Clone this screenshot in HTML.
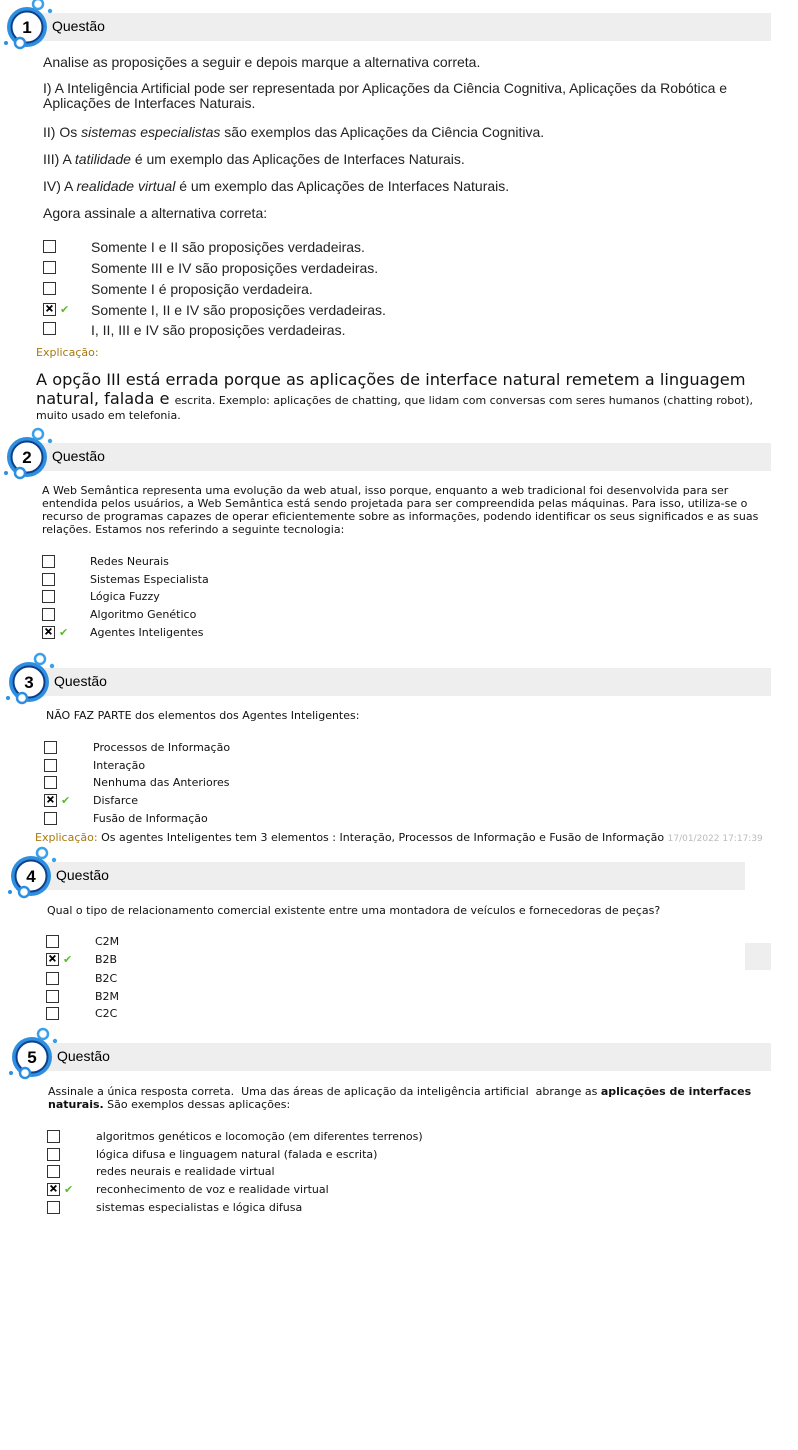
<!DOCTYPE html>
<html><head><meta charset="utf-8"><style>
body{margin:0;width:798px;height:1450px;background:#fff;position:relative;overflow:hidden;font-family:"DejaVu Sans",Verdana,sans-serif;color:#000}
.a{position:absolute;white-space:nowrap}
.bar{position:absolute;background:#eeeeee;height:28px}
.t{position:absolute;font-family:"Liberation Sans",Arial,sans-serif;font-size:14px}
.q1{font-family:"Liberation Sans",Arial,sans-serif;font-size:14px;color:#222}
.s{font-size:11px;color:#111}
.cb{position:absolute;width:11px;height:11px;border:1px solid #333;background:#fff}
.cb.x::after{content:"✕";position:absolute;left:0;top:-1px;font-size:10px;font-weight:900;line-height:13px;width:11px;text-align:center;-webkit-text-stroke:0.8px #000}
.ck{position:absolute;color:#5bbd2b;font-size:11px;font-weight:bold}
.ex{color:#a8780c;font-size:11px}
</style></head><body>
<svg width="0" height="0" style="position:absolute"><defs>
<g id="ic">
<circle cx="0" cy="0" r="20" fill="#2e8fe0"/>
<circle cx="0" cy="0" r="15.5" fill="#fff" stroke="#0d3f8c" stroke-width="2"/>
<circle cx="11" cy="-23" r="5" fill="#fff" stroke="#3aa0ea" stroke-width="2.5"/>
<circle cx="23" cy="-16" r="2.2" fill="#3aa0ea"/>
<circle cx="-7" cy="16" r="5" fill="#fff" stroke="#2e8fe0" stroke-width="2.5"/>
<circle cx="-21" cy="16" r="2" fill="#2e8fe0"/>
</g></defs></svg>

<div class="bar" style="left:40px;top:13px;width:731px"></div>
<div class="bar" style="left:40px;top:443px;width:731px"></div>
<div class="bar" style="left:40px;top:668px;width:731px"></div>
<div class="bar" style="left:40px;top:862px;width:705px"></div>
<div class="bar" style="left:40px;top:1043px;width:731px"></div>
<div class="bar" style="left:745px;top:943px;width:26px;height:27px"></div>

<svg class="a" style="left:0;top:0" width="798" height="1450">
<use href="#ic" x="27" y="27"/><text x="27" y="33" font-family="Liberation Sans" font-weight="bold" font-size="17" text-anchor="middle">1</text>
<use href="#ic" x="27" y="457"/><text x="27" y="463" font-family="Liberation Sans" font-weight="bold" font-size="17" text-anchor="middle">2</text>
<use href="#ic" x="29" y="682"/><text x="29" y="688" font-family="Liberation Sans" font-weight="bold" font-size="17" text-anchor="middle">3</text>
<use href="#ic" x="31" y="876"/><text x="31" y="882" font-family="Liberation Sans" font-weight="bold" font-size="17" text-anchor="middle">4</text>
<use href="#ic" x="32" y="1057"/><text x="32" y="1063" font-family="Liberation Sans" font-weight="bold" font-size="17" text-anchor="middle">5</text>
</svg>
<div class="t" style="left:52px;top:18px">Questão</div>
<div class="t" style="left:52px;top:448px">Questão</div>
<div class="t" style="left:54px;top:673px">Questão</div>
<div class="t" style="left:56px;top:867px">Questão</div>
<div class="t" style="left:57px;top:1048px">Questão</div>

<!-- Q1 -->
<div class="a q1" style="left:43px;top:54px">Analise as proposições a seguir e depois marque a alternativa correta.</div>
<div class="a q1" style="left:43px;top:81px;line-height:15px">I) A Inteligência Artificial pode ser representada por Aplicações da Ciência Cognitiva, Aplicações da Robótica e<br>Aplicações de Interfaces Naturais.</div>
<div class="a q1" style="left:43px;top:124px">II) Os <i>sistemas especialistas</i> são exemplos das Aplicações da Ciência Cognitiva.</div>
<div class="a q1" style="left:43px;top:151px">III) A <i>tatilidade</i> é um exemplo das Aplicações de Interfaces Naturais.</div>
<div class="a q1" style="left:43px;top:178px">IV) A <i>realidade virtual</i> é um exemplo das Aplicações de Interfaces Naturais.</div>
<div class="a q1" style="left:43px;top:205px">Agora assinale a alternativa correta:</div>
<div class="cb" style="left:43px;top:240px"></div><div class="a q1" style="left:91px;top:239px">Somente I e II são proposições verdadeiras.</div>
<div class="cb" style="left:43px;top:261px"></div><div class="a q1" style="left:91px;top:260px">Somente III e IV são proposições verdadeiras.</div>
<div class="cb" style="left:43px;top:282px"></div><div class="a q1" style="left:91px;top:281px">Somente I é proposição verdadeira.</div>
<div class="cb x" style="left:43px;top:303px"></div><div class="ck" style="left:60px;top:303px">✔</div><div class="a q1" style="left:91px;top:302px">Somente I, II e IV são proposições verdadeiras.</div>
<div class="cb" style="left:43px;top:322px"></div><div class="a q1" style="left:91px;top:322px">I, II, III e IV são proposições verdadeiras.</div>
<div class="a ex" style="left:36px;top:346px">Explicação:</div>
<div class="a" style="left:36px;top:370px;font-size:16.2px;color:#111;line-height:19px">A opção III está errada porque as aplicações de interface natural remetem a linguagem<br>natural, falada e <span style="font-size:11px">escrita. Exemplo: aplicações de chatting, que lidam com conversas com seres humanos (chatting robot),</span></div>
<div class="a s" style="left:36px;top:409px">muito usado em telefonia.</div>

<!-- Q2 -->
<div class="a s" style="left:42px;top:484px;line-height:13px">A Web Semântica representa uma evolução da web atual, isso porque, enquanto a web tradicional foi desenvolvida para ser<br>entendida pelos usuários, a Web Semântica está sendo projetada para ser compreendida pelas máquinas. Para isso, utiliza-se o<br>recurso de programas capazes de operar eficientemente sobre as informações, podendo identificar os seus significados e as suas<br>relações. Estamos nos referindo a seguinte tecnologia:</div>
<div class="cb" style="left:42px;top:555px"></div><div class="a s" style="left:90px;top:555px">Redes Neurais</div>
<div class="cb" style="left:42px;top:573px"></div><div class="a s" style="left:90px;top:573px">Sistemas Especialista</div>
<div class="cb" style="left:42px;top:590px"></div><div class="a s" style="left:90px;top:590px">Lógica Fuzzy</div>
<div class="cb" style="left:42px;top:608px"></div><div class="a s" style="left:90px;top:608px">Algoritmo Genético</div>
<div class="cb x" style="left:42px;top:626px"></div><div class="ck" style="left:59px;top:626px">✔</div><div class="a s" style="left:90px;top:626px">Agentes Inteligentes</div>

<!-- Q3 -->
<div class="a s" style="left:46px;top:709px">NÃO FAZ PARTE dos elementos dos Agentes Inteligentes:</div>
<div class="cb" style="left:44px;top:741px"></div><div class="a s" style="left:93px;top:741px">Processos de Informação</div>
<div class="cb" style="left:44px;top:759px"></div><div class="a s" style="left:93px;top:759px">Interação</div>
<div class="cb" style="left:44px;top:776px"></div><div class="a s" style="left:93px;top:776px">Nenhuma das Anteriores</div>
<div class="cb x" style="left:44px;top:794px"></div><div class="ck" style="left:61px;top:794px">✔</div><div class="a s" style="left:93px;top:794px">Disfarce</div>
<div class="cb" style="left:44px;top:812px"></div><div class="a s" style="left:93px;top:812px">Fusão de Informação</div>
<div class="a s" style="left:35px;top:831px"><span class="ex">Explicação:</span> Os agentes Inteligentes tem 3 elementos : Interação, Processos de Informação e Fusão de Informação <span style="color:#bbb;font-size:9px">17/01/2022 17:17:39</span></div>

<!-- Q4 -->
<div class="a s" style="left:47px;top:904px">Qual o tipo de relacionamento comercial existente entre uma montadora de veículos e fornecedoras de peças?</div>
<div class="cb" style="left:46px;top:935px"></div><div class="a s" style="left:95px;top:935px">C2M</div>
<div class="cb x" style="left:46px;top:953px"></div><div class="ck" style="left:63px;top:953px">✔</div><div class="a s" style="left:95px;top:953px">B2B</div>
<div class="cb" style="left:46px;top:972px"></div><div class="a s" style="left:95px;top:972px">B2C</div>
<div class="cb" style="left:46px;top:990px"></div><div class="a s" style="left:95px;top:990px">B2M</div>
<div class="cb" style="left:46px;top:1007px"></div><div class="a s" style="left:95px;top:1007px">C2C</div>

<!-- Q5 -->
<div class="a s" style="left:48px;top:1085px;line-height:13px">Assinale a única resposta correta.&nbsp; Uma das áreas de aplicação da inteligência artificial&nbsp; abrange as <b>aplicações de interfaces</b><br><b>naturais.</b> São exemplos dessas aplicações:</div>
<div class="cb" style="left:47px;top:1130px"></div><div class="a s" style="left:96px;top:1130px">algoritmos genéticos e locomoção (em diferentes terrenos)</div>
<div class="cb" style="left:47px;top:1148px"></div><div class="a s" style="left:96px;top:1148px">lógica difusa e linguagem natural (falada e escrita)</div>
<div class="cb" style="left:47px;top:1165px"></div><div class="a s" style="left:96px;top:1165px">redes neurais e realidade virtual</div>
<div class="cb x" style="left:47px;top:1183px"></div><div class="ck" style="left:64px;top:1183px">✔</div><div class="a s" style="left:96px;top:1183px">reconhecimento de voz e realidade virtual</div>
<div class="cb" style="left:47px;top:1201px"></div><div class="a s" style="left:96px;top:1201px">sistemas especialistas e lógica difusa</div>
</body></html>
